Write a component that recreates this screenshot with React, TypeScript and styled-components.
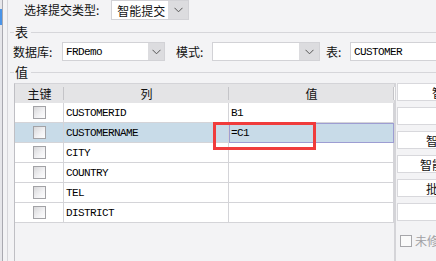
import styled, { createGlobalStyle } from "styled-components";

const GlobalStyle = createGlobalStyle`
  html, body {
    margin: 0;
    padding: 0;
    background: #f3f3f5;
  }
  body {
    font-family: "Noto Sans CJK SC", "Liberation Sans", sans-serif;
    font-size: 12px;
    color: #111;
  }
`;

const MONO = `"Liberation Mono", "DejaVu Sans Mono", monospace`;

const Root = styled.div`
  display: flex;
  width: 436px;
  height: 261px;
  overflow: hidden;
  background: #f3f3f5;
`;

const Rail = styled.div`
  width: 2px;
  flex: none;
  background: #e6e6ea;
  border-right: 1px solid #a9a9b0;
  display: flex;
  flex-direction: column;
`;

const RailMarker = styled.div`
  margin-top: 9px;
  height: 16px;
  background: #4a94e8;
`;

const Main = styled.div`
  flex: 1;
  min-width: 0;
  margin-left: 4px;
  border-left: 1px solid #d6d6da;
  display: flex;
  flex-direction: column;
`;

const TopRow = styled.div`
  height: 20px;
  display: flex;
  align-items: center;
  padding-left: 16px;
`;

const Label = styled.span<{ $w?: number; $ml?: number }>`
  flex: none;
  line-height: 16px;
  white-space: nowrap;
  ${({ $w }) => ($w ? `width: ${$w}px;` : "")}
  ${({ $ml }) => ($ml ? `margin-left: ${$ml}px;` : "")}
`;

const Combo = styled.div<{ $w: number; $arrow: number; $h?: number; $ml?: number }>`
  flex: none;
  box-sizing: border-box;
  width: ${({ $w }) => $w}px;
  height: ${({ $h }) => $h ?? 19}px;
  ${({ $ml }) => ($ml ? `margin-left: ${$ml}px;` : "")}
  display: flex;
  background: #fff;
  border: 1px solid #d2d2d6;

  & > span {
    flex: 1;
    min-width: 0;
    padding-left: 3px;
    display: flex;
    align-items: center;
    overflow: hidden;
    white-space: nowrap;
  }

  & > i {
    flex: none;
    width: ${({ $arrow }) => $arrow}px;
    background: #dcdcdf;
    display: flex;
    align-items: center;
    justify-content: center;
  }
`;

const MonoText = styled.span`
  font-family: ${MONO};
  font-size: 11px;
  letter-spacing: -0.6px;
  color: #000;
`;

const GroupTitle = styled.div<{ $mt: number }>`
  height: 16px;
  margin-top: ${({ $mt }) => $mt}px;
  display: flex;
  align-items: center;
  padding-left: 2px;
  gap: 1px;

  &::before {
    content: "";
    width: 4px;
    height: 1px;
    background: #d6d6da;
  }
  &::after {
    content: "";
    flex: 1;
    height: 1px;
    margin-left: 2px;
    background: #d6d6da;
  }
`;

const TitleText = styled.span`
  font-size: 13px;
  line-height: 16px;
`;

const FieldRow = styled.div`
  margin-top: 2px;
  height: 19px;
  display: flex;
  align-items: center;
  padding-left: 5px;
`;

const TableZone = styled.div`
  margin-top: 3px;
  flex: 1;
  display: flex;
  padding-left: 6px;
`;

const TableWrap = styled.div`
  position: relative;
  flex: none;
  width: 380px;
  border-left: 1px solid #bfbfc4;
  border-top: 1px solid #d4d4d8;
  box-sizing: border-box;
`;

const Grid = styled.div`
  display: grid;
  grid-template-columns: 49px 165px 165px;
`;

const HeadCell = styled.div`
  position: relative;
  height: 19px;
  background: #e4e4e6;
  display: flex;
  align-items: center;
  justify-content: center;
  font-size: 12px;

  &::after {
    content: "";
    position: absolute;
    right: 0;
    top: 3px;
    bottom: 3px;
    width: 1px;
    background: #c4c4c8;
    box-shadow: 1px 0 0 #fafafa;
  }
`;

const Cell = styled.div<{ $sel: boolean; $edit?: boolean; $center?: boolean }>`
  box-sizing: border-box;
  height: 20px;
  display: flex;
  align-items: center;
  justify-content: ${({ $center }) => ($center ? "center" : "flex-start")};
  padding-left: ${({ $center }) => ($center ? 0 : 2)}px;
  background: ${({ $sel }) => ($sel ? "#c8dbe8" : "#fff")};
  border-bottom: 1px solid #d4d4d8;
  border-right: 1px solid #d4d4d8;
  ${({ $edit }) =>
    $edit ? "border: 1px solid #9d9dd2; padding-left: 1px;" : ""}
`;

const CheckBox = styled.div`
  width: 13px;
  height: 13px;
  box-sizing: border-box;
  border: 1px solid #a2a2a6;
  background: linear-gradient(135deg, #d8d8da 0%, #f2f2f4 60%, #fdfdfd 100%);
`;

const Highlight = styled.div`
  position: absolute;
  left: 198px;
  top: 38px;
  width: 103px;
  height: 28px;
  box-sizing: border-box;
  border: 3px solid #f03c3c;
  pointer-events: none;
`;

const TableEdge = styled.div`
  width: 2px;
  flex: none;
  background: #d4d4d8;
`;

const SidePanel = styled.div`
  flex: none;
  width: 142px;
  margin-left: 1px;
  display: flex;
  flex-direction: column;
  gap: 6px;
`;

const SideButton = styled.div`
  height: 18px;
  box-sizing: border-box;
  background: #fff;
  border: 1px solid #d8d8dc;
  display: flex;
  align-items: center;
  justify-content: center;
  font-size: 12px;
  white-space: nowrap;
`;

const CheckLine = styled.div`
  margin-top: 5px;
  padding-left: 3px;
  display: flex;
  align-items: center;
  gap: 3px;
  color: #a0a0a4;
  font-size: 12px;
  white-space: nowrap;

  & > b {
    width: 10px;
    height: 10px;
    border: 1px solid #a6a6aa;
    background: #fafafa;
  }
`;

const Chevron = () => (
  <svg width="9" height="6" viewBox="0 0 9 6">
    <polyline points="0.5,0.8 4.5,4.8 8.5,0.8" fill="none" stroke="#555" strokeWidth="1" />
  </svg>
);

const rows = ["CUSTOMERID", "CUSTOMERNAME", "CITY", "COUNTRY", "TEL", "DISTRICT"];
const values: Record<number, string> = { 0: "B1", 1: "=C1" };
const buttons = [
  "智能添加字段",
  "添加字段",
  "智能添加单元格",
  "智能添加单元格组",
  "批量修改单元格",
  "删除字段",
];

export default function App() {
  return (
    <>
      <GlobalStyle />
      <Root>
        <Rail>
          <RailMarker />
        </Rail>
        <Main>
          <TopRow>
            <Label>选择提交类型:</Label>
            <Combo $w={78} $arrow={20} $h={20} $ml={12}>
              <span style={{ paddingLeft: 5, fontSize: 12 }}>智能提交</span>
              <i>
                <Chevron />
              </i>
            </Combo>
          </TopRow>

          <GroupTitle $mt={4}>
            <TitleText>表</TitleText>
          </GroupTitle>
          <FieldRow>
            <Label $w={49}>数据库:</Label>
            <Combo $w={103} $arrow={16}>
              <span>
                <MonoText>FRDemo</MonoText>
              </span>
              <i>
                <Chevron />
              </i>
            </Combo>
            <Label $w={36} $ml={11}>模式:</Label>
            <Combo $w={108} $arrow={20}>
              <span />
              <i>
                <Chevron />
              </i>
            </Combo>
            <Label $w={24} $ml={6}>表:</Label>
            <Combo $w={120} $arrow={0}>
              <span>
                <MonoText>CUSTOMER</MonoText>
              </span>
            </Combo>
          </FieldRow>

          <GroupTitle $mt={3}>
            <TitleText>值</TitleText>
          </GroupTitle>
          <TableZone>
            <TableWrap>
              <Grid>
                <HeadCell>主键</HeadCell>
                <HeadCell>列</HeadCell>
                <HeadCell>值</HeadCell>
                {rows.map((name, i) => {
                  const sel = i === 1;
                  return [
                    <Cell key={name + "k"} $sel={sel} $center>
                      <CheckBox />
                    </Cell>,
                    <Cell key={name + "c"} $sel={sel}>
                      <MonoText>{name}</MonoText>
                    </Cell>,
                    <Cell key={name + "v"} $sel={sel} $edit={sel}>
                      <MonoText>{values[i] ?? ""}</MonoText>
                    </Cell>,
                  ];
                })}
              </Grid>
              <Highlight />
            </TableWrap>
            <TableEdge />
            <SidePanel>
              {buttons.map((b) => (
                <SideButton key={b}>{b}</SideButton>
              ))}
              <CheckLine>
                <b />
                未修改不更新
              </CheckLine>
            </SidePanel>
          </TableZone>
        </Main>
      </Root>
    </>
  );
}
